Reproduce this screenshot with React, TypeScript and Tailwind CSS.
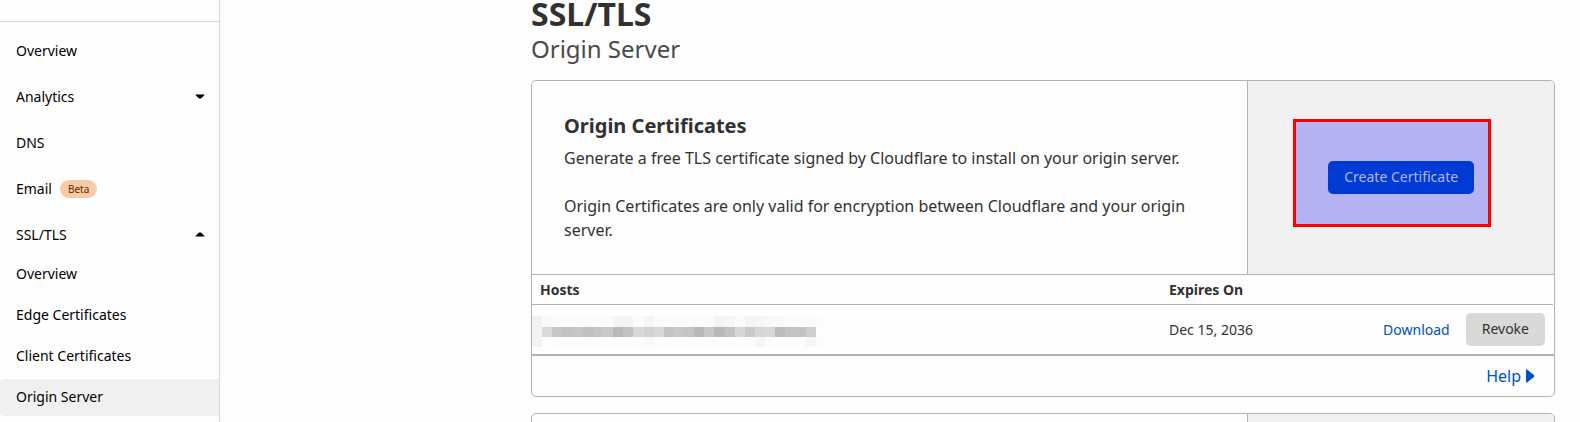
const topShades = ["#f1f1f1", "#f9f9f9", "#fbfbfb", "#fbfbfb", "#fbfbfb", "#fafafa", "#fbfbfb", "#fbfbfb", "#f4f4f4", "#f5f5f5", "#fbfbfb", "#f5f5f5", "#fbfbfb", "#fbfbfb", "#fbfbfb", "#fbfbfb", "#fafafa", "#fbfbfb", "#f4f4f4", "#f6f6f6", "#fbfbfb", "#f4f4f4", "#f6f6f6", "#f8f8f8", "#f8f8f8", "#fbfbfb", "#fafafa", "#fafafa", "#fcfcfc"];
const midShades = ["#f3f3f3", "#dadada", "#c8c8c8", "#c3c3c3", "#c6c6c6", "#c0c0c0", "#c4c4c4", "#c8c8c8", "#b9b9b9", "#c2c2c2", "#d8d8d8", "#d2d2d2", "#d8d8d8", "#c3c3c3", "#c8c8c8", "#c4c4c4", "#b9b9b9", "#c8c8c8", "#b9b9b9", "#c2c2c2", "#d6d6d6", "#cacaca", "#d6d6d6", "#d8d8d8", "#bcbcbc", "#c3c3c3", "#c3c3c3", "#cfcfcf", "#fdfdfd"];
const lowShades = ["#f3f3f3", "#fdfdfd", "#fcfcfc", "#fcfcfc", "#fcfcfc", "#fcfcfc", "#fcfcfc", "#fcfcfc", "#fcfcfc", "#fcfcfc", "#fcfcfc", "#f9f9f9", "#fcfcfc", "#fcfcfc", "#fcfcfc", "#fcfcfc", "#fcfcfc", "#fcfcfc", "#fcfcfc", "#fcfcfc", "#fcfcfc", "#fcfcfc", "#f6f6f6", "#fcfcfc", "#fcfcfc", "#fcfcfc", "#fcfcfc", "#f6f6f6", "#fcfcfc"];

function RedactedHosts() {
  return (
    <svg width="294" height="31" viewBox="0 0 29 31" preserveAspectRatio="none" shapeRendering="crispEdges" aria-hidden="true" className="block">
      {topShades.map((c, i) => <rect key={i} x={i} y="0" width="1" height="11" fill={c} />)}
      {midShades.map((c, i) => <rect key={i} x={i} y="11" width="1" height="10" fill={c} />)}
      {lowShades.map((c, i) => <rect key={i} x={i} y="21" width="1" height="10" fill={c} />)}
    </svg>
  );
}

const item = "flex h-[42px] w-full items-center px-4";
const subItem = "flex h-[37px] items-center rounded-l-sm px-4 pb-0.5";
const smallButton = "h-[33px] rounded-[5px] px-4 pb-0.5 text-sm";

function Caret({ up = false }: { up?: boolean }) {
  return (
    <svg width="10" height="5" viewBox="0 0 10 5" className="-mr-0.5 mb-0.5 ml-auto" aria-hidden="true">
      <path d={up ? "M.5 4.5V4L4 .5h2L9.500 4v.5z" : "M.5.5V1L4 4.500h2L9.500 1V.5z"} fill="#000" />
    </svg>
  );
}

function Sidebar() {
  return (
    <nav className="w-[220px] shrink-0 border-r border-[#d5d5d5] text-sm text-black">
      <div className="h-[22px] border-b border-[#d5d5d5]" />
      <ul className="flex flex-col gap-1 pt-2">
        <li><a href="#overview" className={item}>Overview</a></li>
        <li><button type="button" className={item}>Analytics<Caret /></button></li>
        <li><a href="#dns" className={item}>DNS</a></li>
        <li>
          <a href="#email" className={item}>
            Email
            <span className="ml-2 rounded-full bg-[#f9cba4] px-2 text-[10px] leading-[18px] text-[#5b2c06]">Beta</span>
          </a>
        </li>
        <li>
          <button type="button" aria-expanded="true" className={item}>SSL/TLS<Caret up /></button>
          <ul className="flex flex-col gap-1">
            <li><a href="#ssl" className={subItem}>Overview</a></li>
            <li><a href="#edge" className={subItem}>Edge Certificates</a></li>
            <li><a href="#client" className={subItem}>Client Certificates</a></li>
            <li><a href="#origin" aria-current="page" className={`${subItem} bg-[#f0f0f0]`}>Origin Server</a></li>
          </ul>
        </li>
      </ul>
    </nav>
  );
}

export default function App() {
  return (
    <div className="flex h-screen overflow-hidden bg-[#fefefe] font-['Noto_Sans',sans-serif] text-[#313131]">
      <Sidebar />
      <main className="min-w-0 flex-1 pr-[25px] pl-[311px]">
        <h1 className="text-[32px] leading-7 font-bold">SSL/TLS</h1>
        <p className="pt-1.5 text-2xl leading-[30px] text-[#4a4a4a]">Origin Server</p>

        <section className="mt-4 overflow-hidden rounded-[5px] border border-[#b3b3b3]">
          <div className="flex">
            <div className="w-[70%] p-8">
              <h2 className="mb-2 text-xl leading-[25px] font-bold">Origin Certificates</h2>
              <p className="leading-6">Generate a free TLS certificate signed by Cloudflare to install on your origin server.</p>
              <p className="mt-6 leading-6">Origin Certificates are only valid for encryption between Cloudflare and your origin server.</p>
            </div>
            <div className="flex w-[30%] items-center justify-center border-l border-[#b3b3b3] bg-[#f0f0f0]">
              <div className="relative">
                <div className="absolute -top-[42px] -left-[35px] h-[108px] w-[198px] border-3 border-[#ff0000] bg-[#b5b3f3]" />
                <button type="button" className={`${smallButton} relative bg-[#003ad4] text-[#b0b7f0]`}>Create Certificate</button>
              </div>
            </div>
          </div>

          <div className="border-y border-[#b3b3b3] pr-px">
            <table className="w-full border-separate border-spacing-0 text-left text-sm">
              <thead>
                <tr className="h-[30px]">
                  <th className="w-[629px] border-b border-[#b3b3b3] px-2 font-bold">Hosts</th>
                  <th className="border-b border-[#b3b3b3] px-2 font-bold">Expires On</th>
                  <th className="border-b border-[#b3b3b3]" aria-label="Actions" />
                </tr>
              </thead>
              <tbody>
                <tr className="h-[49px]">
                  <td className="pt-1 pr-2 pb-0 pl-0"><RedactedHosts /></td>
                  <td className="px-2 py-0">Dec 15, 2036</td>
                  <td className="px-2 py-0">
                    <div className="flex items-center justify-end gap-4">
                      <a href="#download" className="text-[#0051c3]">Download</a>
                      <button type="button" className={`${smallButton} bg-[#d9d9d9]`}>Revoke</button>
                    </div>
                  </td>
                </tr>
              </tbody>
            </table>
          </div>

          <div className="flex h-[41px] items-center justify-end border-t border-[#b3b3b3] pr-5">
            <a href="#help" className="flex items-center gap-[5px] text-[#0051c3]">
              Help
              <svg width="8" height="14" viewBox="0 0 8 14" aria-hidden="true"><path d="M0 .5H1L8 6v2L1 13.500H0z" fill="currentColor" /></svg>
            </a>
          </div>
        </section>

        <section className="mt-4 flex h-48 overflow-hidden rounded-[5px] border border-[#b3b3b3]">
          <div className="w-[70%]" />
          <div className="w-[30%] border-l border-[#b3b3b3] bg-[#f0f0f0]" />
        </section>
      </main>
    </div>
  );
}
